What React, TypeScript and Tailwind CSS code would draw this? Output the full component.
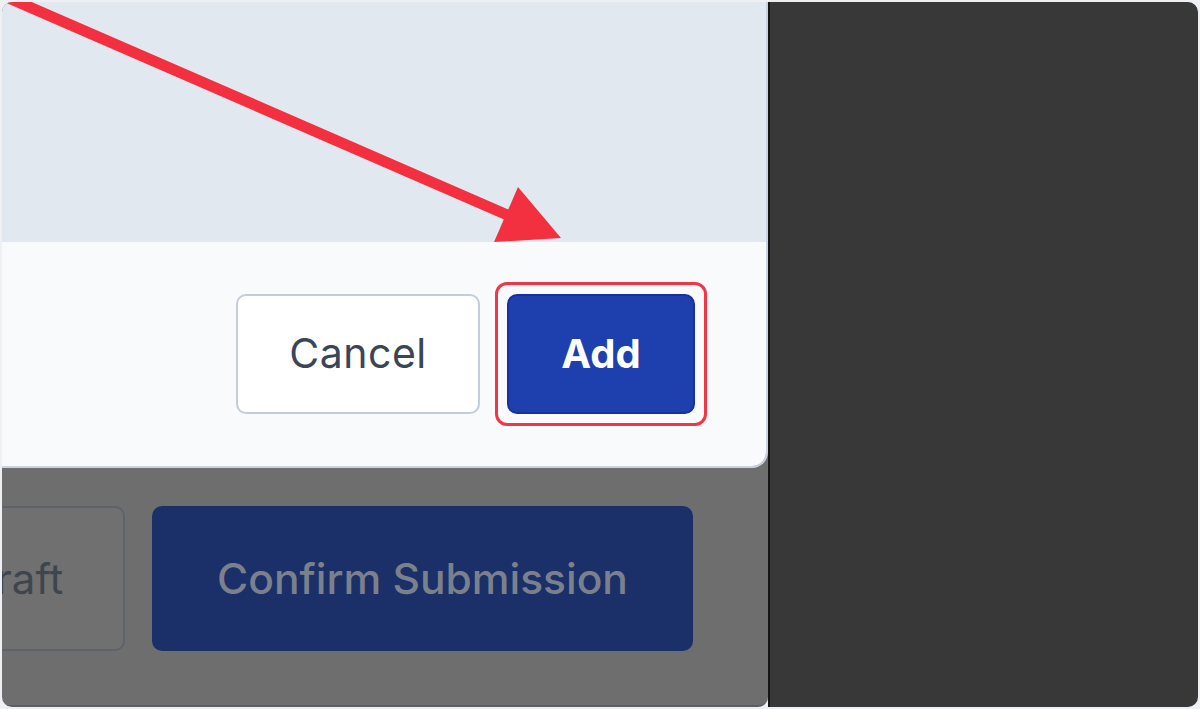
export default function App() {
  return (
    <div className="w-[1200px] h-[709px] bg-[#eef0f3] p-[2px] font-['Inter',sans-serif]">
      <div className="flex h-full rounded-[10px] overflow-hidden">
        {/* Left: page with open modal */}
        <div className="relative w-[766px] flex flex-col bg-[#6e6e6e] rounded-br-[10px] overflow-hidden border-b-2 border-[#5a5d62]">
          {/* Modal */}
          <div className="h-[466px] flex flex-col rounded-br-[16px] overflow-hidden border-b-2 border-r-2 border-[#c9d2de] shrink-0">
            <div className="h-[240px] bg-[#e2e8f0]" />
            <div className="flex-1 bg-[#f8fafc] flex items-center justify-end gap-[15px] pr-[59px]">
              <button className="w-[244px] h-[120px] rounded-[10px] border-2 border-[#c3ccd9] bg-white text-[41px] text-[#3a4658] tracking-[0.5px]">
                Cancel
              </button>
              <div className="rounded-[12px] border-[3px] border-[#f03747] p-[9px]">
                <button className="w-[188px] h-[120px] rounded-[10px] border-2 border-[#1a2fa0] bg-[#1e40af] text-[40px] font-bold text-white">
                  Add
                </button>
              </div>
            </div>
          </div>

          {/* Page behind overlay */}
          <div className="flex-1 flex items-start justify-end gap-[27px] pt-[38px] pr-[75px]">
            <button className="w-[330px] shrink-0 h-[145px] rounded-[10px] border-2 border-[#5e636b] bg-[#707070] text-[42px] text-[#3f454d]">
              Save Draft
            </button>
            <button className="w-[541px] shrink-0 h-[145px] rounded-[10px] bg-[#1b3068] text-[42.5px] font-medium text-[#7b818c]">
              Confirm Submission
            </button>
          </div>

          {/* Annotation arrow */}
          <svg
            className="absolute left-0 top-0 pointer-events-none"
            width="766"
            height="460"
            viewBox="2 2 766 460"
          >
            <line x1="-20" y1="-14.5" x2="512" y2="217" stroke="#f2303f" strokeWidth="11" />
            <polygon points="518,187 494,242 561,238" fill="#f2303f" />
          </svg>
        </div>

        {/* Right dark area */}
        <div className="flex-1 bg-[#383838] border-l-2 border-[#161616]" />
      </div>
    </div>
  );
}
